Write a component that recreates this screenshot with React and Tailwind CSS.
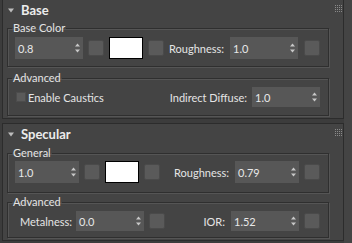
import React from "react";

function Arrows() {
  return (
    <svg width="5" height="10" viewBox="0 0 5 10" className="shrink-0">
      <path d="M2.5 0.5L5 3.5H0z" fill="#c8c8c8" />
      <path d="M2.5 9.5L0 6.5H5z" fill="#c8c8c8" />
    </svg>
  );
}

function Spinner({ value, className }) {
  return (
    <div className={`flex items-center justify-between bg-[#575757] pl-[3px] pr-[3px] shrink-0 ${className}`}>
      <span className="text-[#e8e8e8]">{value}</span>
      <Arrows />
    </div>
  );
}

function Sq({ className = "" }) {
  return <div className={`w-[16px] h-[16px] shrink-0 rounded-[2px] bg-[#5a5a5a] border border-[#4a4a4a] ${className}`} />;
}

function Swatch({ className = "" }) {
  return <div className={`w-[34px] h-[22px] shrink-0 bg-white border border-black ${className}`} />;
}

function Grip() {
  return (
    <svg width="7" height="7" viewBox="0 0 7 7" className="shrink-0">
      {[0, 2, 4, 6].map((y) =>
        [0, 2, 4, 6].map((x) => <rect key={`${x}-${y}`} x={x} y={y} width="1" height="1" fill="#8a8a8a" />)
      )}
    </svg>
  );
}

function Tri() {
  return (
    <svg width="6" height="5" viewBox="0 0 6 5" className="shrink-0">
      <path d="M0 0.5H6L3 4.5z" fill="#bdbdbd" />
    </svg>
  );
}

function Header({ title }) {
  return (
    <div className="flex items-center h-[20px] pl-[5px] pr-[1px]">
      <Tri />
      <span className="ml-[7px] text-[13px] leading-[16px] font-bold text-[#ececec]">{title}</span>
      <div className="ml-auto self-start mt-[5px]">
        <Grip />
      </div>
    </div>
  );
}

function Group({ label, children, className = "" }) {
  return (
    <fieldset
      className={`ml-[4px] mr-[14px] border border-[#2f2f2f] shadow-[1px_1px_0_#555,inset_1px_1px_0_#555] px-0 ${className}`}
    >
      <legend className="ml-[4px] px-px text-[11px] leading-[12px] text-[#e4e4e4]">{label}</legend>
      {children}
    </fieldset>
  );
}

export default function App() {
  return (
    <div className="w-[352px] h-[243px] overflow-hidden bg-[#3c3c3c] [font-family:Lato,sans-serif] text-[11px] leading-[13px] text-[#e4e4e4] flex">
      <div className="w-[342px] ml-[2px] flex flex-col">
        {/* Base rollout */}
        <div className="-mt-px bg-[#444444] border border-[#2c2c2c] pb-[2px]">
          <Header title="Base" />
          <Group label="Base Color" className="mt-[2px] pt-[3px] pb-[7px]">
            <div className="flex items-center pl-[7px] pr-[8px]">
              <Spinner value="0.8" className="w-[68px] h-[22px]" />
              <Sq className="ml-[5px]" />
              <Swatch className="ml-[5px]" />
              <Sq className="ml-[5px]" />
              <div className="ml-auto flex items-center">
                <span>Roughness:</span>
                <Spinner value="1.0" className="ml-[6px] w-[68px] h-[22px]" />
                <Sq className="ml-[6px]" />
              </div>
            </div>
          </Group>
          <Group label="Advanced" className="mt-[5px] pt-[3px] pb-[8px]">
            <div className="flex items-center h-[20px] pl-[8px] pr-[8px]">
              <div className="w-[10px] h-[10px] shrink-0 bg-[#5a5a5a] border border-[#4c4c4c]" />
              <span className="ml-[2px]">Enable Caustics</span>
              <div className="ml-auto flex items-center">
                <span>Indirect Diffuse:</span>
                <Spinner value="1.0" className="ml-[5px] w-[68px] h-[20px]" />
              </div>
            </div>
          </Group>
        </div>

        {/* Specular rollout */}
        <div className="mt-[4px] bg-[#444444] border border-[#2c2c2c] pb-[2px]">
          <Header title="Specular" />
          <Group label="General" className="mt-[3px] pt-[2px] pb-[9px]">
            <div className="flex items-center pl-[7px] pr-[8px]">
              <Spinner value="1.0" className="w-[64px] h-[22px]" />
              <Sq className="ml-[5px]" />
              <Swatch className="ml-[5px]" />
              <Sq className="ml-[5px]" />
              <div className="ml-auto flex items-center">
                <span>Roughness:</span>
                <Spinner value="0.79" className="ml-[6px] w-[64px] h-[22px]" />
                <Sq className="ml-[5px]" />
              </div>
            </div>
          </Group>
          <Group label="Advanced" className="mt-[3px] pt-[3px] pb-[6px]">
            <div className="flex items-center h-[20px] pl-[12px] pr-[8px]">
              <span>Metalness:</span>
              <Spinner value="0.0" className="ml-[4px] w-[68px] h-[20px]" />
              <Sq className="ml-[5px]" />
              <div className="ml-auto flex items-center">
                <span>IOR:</span>
                <Spinner value="1.52" className="ml-[6px] w-[68px] h-[20px]" />
                <Sq className="ml-[5px]" />
              </div>
            </div>
          </Group>
        </div>
      </div>
      <div className="flex-1 bg-[#444444]" />
    </div>
  );
}
